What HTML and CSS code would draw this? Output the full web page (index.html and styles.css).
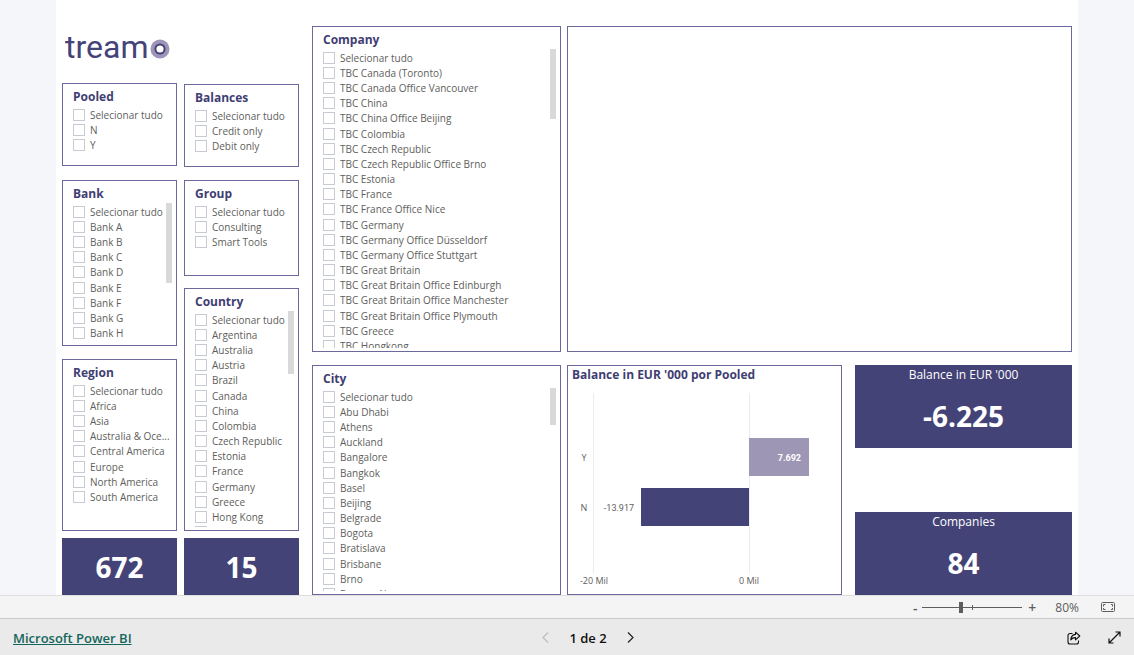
FILE: index.html
```html
<!DOCTYPE html>
<html lang="pt">
<head>
<meta charset="utf-8">
<title>Treamo – Microsoft Power BI</title>
<link rel="stylesheet" href="styles.css">
</head>
<body>
<div class="report">
  <main class="canvas">
    <div class="filters">
      <h1 class="logo">
        <span>tream</span><svg class="logo-ring" viewBox="0 0 20 20" role="img" aria-label="o"><circle cx="10" cy="10" r="9.5" fill="#9e96b8"/><circle cx="10" cy="10" r="4.6" fill="#fff" stroke="#444377" stroke-width="2"/></svg>
      </h1>
      <div class="filter-columns">
        <div class="stack first">
          <section class="panel slicer pooled">
            <h2>Pooled</h2>
            <ul>
              <li><label><input type="checkbox"><span>Selecionar tudo</span></label></li>
              <li><label><input type="checkbox"><span>N</span></label></li>
              <li><label><input type="checkbox"><span>Y</span></label></li>
            </ul>
          </section>
          <section class="panel slicer bank">
            <h2>Bank</h2>
            <ul>
              <li><label><input type="checkbox"><span>Selecionar tudo</span></label></li>
              <li><label><input type="checkbox"><span>Bank A</span></label></li>
              <li><label><input type="checkbox"><span>Bank B</span></label></li>
              <li><label><input type="checkbox"><span>Bank C</span></label></li>
              <li><label><input type="checkbox"><span>Bank D</span></label></li>
              <li><label><input type="checkbox"><span>Bank E</span></label></li>
              <li><label><input type="checkbox"><span>Bank F</span></label></li>
              <li><label><input type="checkbox"><span>Bank G</span></label></li>
              <li><label><input type="checkbox"><span>Bank H</span></label></li>
            </ul>
            <i class="thumb"></i>
          </section>
          <section class="panel slicer region">
            <h2>Region</h2>
            <ul>
              <li><label><input type="checkbox"><span>Selecionar tudo</span></label></li>
              <li><label><input type="checkbox"><span>Africa</span></label></li>
              <li><label><input type="checkbox"><span>Asia</span></label></li>
              <li><label><input type="checkbox"><span>Australia &amp; Oce...</span></label></li>
              <li><label><input type="checkbox"><span>Central America</span></label></li>
              <li><label><input type="checkbox"><span>Europe</span></label></li>
              <li><label><input type="checkbox"><span>North America</span></label></li>
              <li><label><input type="checkbox"><span>South America</span></label></li>
            </ul>
          </section>
          <section class="tile"><p class="value">672</p></section>
        </div>
        <div class="stack second">
          <section class="panel slicer balances">
            <h2>Balances</h2>
            <ul>
              <li><label><input type="checkbox"><span>Selecionar tudo</span></label></li>
              <li><label><input type="checkbox"><span>Credit only</span></label></li>
              <li><label><input type="checkbox"><span>Debit only</span></label></li>
            </ul>
          </section>
          <section class="panel slicer group">
            <h2>Group</h2>
            <ul>
              <li><label><input type="checkbox"><span>Selecionar tudo</span></label></li>
              <li><label><input type="checkbox"><span>Consulting</span></label></li>
              <li><label><input type="checkbox"><span>Smart Tools</span></label></li>
            </ul>
          </section>
          <section class="panel slicer country">
            <h2>Country</h2>
            <ul>
              <li><label><input type="checkbox"><span>Selecionar tudo</span></label></li>
              <li><label><input type="checkbox"><span>Argentina</span></label></li>
              <li><label><input type="checkbox"><span>Australia</span></label></li>
              <li><label><input type="checkbox"><span>Austria</span></label></li>
              <li><label><input type="checkbox"><span>Brazil</span></label></li>
              <li><label><input type="checkbox"><span>Canada</span></label></li>
              <li><label><input type="checkbox"><span>China</span></label></li>
              <li><label><input type="checkbox"><span>Colombia</span></label></li>
              <li><label><input type="checkbox"><span>Czech Republic</span></label></li>
              <li><label><input type="checkbox"><span>Estonia</span></label></li>
              <li><label><input type="checkbox"><span>France</span></label></li>
              <li><label><input type="checkbox"><span>Germany</span></label></li>
              <li><label><input type="checkbox"><span>Greece</span></label></li>
              <li><label><input type="checkbox"><span>Hong Kong</span></label></li>
              <li><label><input type="checkbox" aria-label="Hungary"></label></li>
            </ul>
            <i class="thumb"></i>
          </section>
          <section class="tile"><p class="value">15</p></section>
        </div>
      </div>
    </div>

    <div class="stack places">
      <section class="panel slicer company">
        <h2>Company</h2>
        <ul>
          <li><label><input type="checkbox"><span>Selecionar tudo</span></label></li>
          <li><label><input type="checkbox"><span>TBC Canada (Toronto)</span></label></li>
          <li><label><input type="checkbox"><span>TBC Canada Office Vancouver</span></label></li>
          <li><label><input type="checkbox"><span>TBC China</span></label></li>
          <li><label><input type="checkbox"><span>TBC China Office Beijing</span></label></li>
          <li><label><input type="checkbox"><span>TBC Colombia</span></label></li>
          <li><label><input type="checkbox"><span>TBC Czech Republic</span></label></li>
          <li><label><input type="checkbox"><span>TBC Czech Republic Office Brno</span></label></li>
          <li><label><input type="checkbox"><span>TBC Estonia</span></label></li>
          <li><label><input type="checkbox"><span>TBC France</span></label></li>
          <li><label><input type="checkbox"><span>TBC France Office Nice</span></label></li>
          <li><label><input type="checkbox"><span>TBC Germany</span></label></li>
          <li><label><input type="checkbox"><span>TBC Germany Office Düsseldorf</span></label></li>
          <li><label><input type="checkbox"><span>TBC Germany Office Stuttgart</span></label></li>
          <li><label><input type="checkbox"><span>TBC Great Britain</span></label></li>
          <li><label><input type="checkbox"><span>TBC Great Britain Office Edinburgh</span></label></li>
          <li><label><input type="checkbox"><span>TBC Great Britain Office Manchester</span></label></li>
          <li><label><input type="checkbox"><span>TBC Great Britain Office Plymouth</span></label></li>
          <li><label><input type="checkbox"><span>TBC Greece</span></label></li>
          <li><label><input type="checkbox"><span>TBC Hongkong</span></label></li>
        </ul>
        <i class="thumb"></i>
      </section>
      <section class="panel slicer city">
        <h2>City</h2>
        <ul>
          <li><label><input type="checkbox"><span>Selecionar tudo</span></label></li>
          <li><label><input type="checkbox"><span>Abu Dhabi</span></label></li>
          <li><label><input type="checkbox"><span>Athens</span></label></li>
          <li><label><input type="checkbox"><span>Auckland</span></label></li>
          <li><label><input type="checkbox"><span>Bangalore</span></label></li>
          <li><label><input type="checkbox"><span>Bangkok</span></label></li>
          <li><label><input type="checkbox"><span>Basel</span></label></li>
          <li><label><input type="checkbox"><span>Beijing</span></label></li>
          <li><label><input type="checkbox"><span>Belgrade</span></label></li>
          <li><label><input type="checkbox"><span>Bogota</span></label></li>
          <li><label><input type="checkbox"><span>Bratislava</span></label></li>
          <li><label><input type="checkbox"><span>Brisbane</span></label></li>
          <li><label><input type="checkbox"><span>Brno</span></label></li>
          <li><label><input type="checkbox"><span>Buenos Aires</span></label></li>
        </ul>
        <i class="thumb"></i>
      </section>
    </div>

    <div class="stack details">
      <section class="panel map" aria-label="Map"></section>
      <div class="summary">
        <section class="panel chart">
          <h2>Balance in EUR '000 por Pooled</h2>
          <svg viewBox="0 0 273 210">
            <path class="grid-line" d="M25.5 9v180M181.5 9v180"/>
            <rect x="181" y="54" width="60" height="38" fill="#9e96b5"/>
            <rect x="73" y="104" width="108" height="38" fill="#444377"/>
            <g class="axis-label">
              <text x="16" y="77">Y</text>
              <text x="16" y="127">N</text>
              <text x="26" y="200">-20 Mil</text>
              <text x="181" y="200">0 Mil</text>
            </g>
            <text class="bar-label" x="66" y="127">-13.917</text>
            <text class="bar-label inside" x="233" y="77">7.692</text>
          </svg>
        </section>
        <div class="cards">
          <section class="card"><h2>Balance in EUR '000</h2><p class="value">-6.225</p></section>
          <section class="card"><h2>Companies</h2><p class="value">84</p></section>
        </div>
      </div>
    </div>
  </main>

  <div class="zoom-bar">
    <div class="zoom-control">
      <button type="button" aria-label="Reduzir">-</button>
      <input type="range" min="0" max="100" value="38" aria-label="Zoom">
      <button type="button" aria-label="Ampliar">+</button>
    </div>
    <span class="zoom-value">80%</span>
    <button type="button" class="fit" aria-label="Ajustar à página">
      <svg width="15" height="11" viewBox="0 0 15 11" fill="none" stroke="#605e5c"><rect x=".5" y=".5" width="13" height="9" rx="1"/><path d="M2.500 4.500v-2h2M10 2.500h1.500v2M11.500 6v1.500H10M4.500 7.500h-2V6"/></svg>
    </button>
  </div>

  <footer class="footer">
    <a href="#">Microsoft Power BI</a>
    <nav class="pager">
      <button type="button" disabled aria-label="Página anterior"><svg width="7" height="11" viewBox="0 0 7 11" fill="none" stroke="#bdbdbd" stroke-width="1.200"><path d="M6 .5 1 5.500l5 5"/></svg></button>
      <span>1 de 2</span>
      <button type="button" aria-label="Próxima página"><svg width="7" height="11" viewBox="0 0 7 11" fill="none" stroke="#222" stroke-width="1.200"><path d="m1 .5 5 5-5 5"/></svg></button>
    </nav>
    <div class="actions">
      <button type="button" aria-label="Compartilhar"><svg width="14" height="14" viewBox="0 0 14 14" fill="none" stroke="#111" stroke-width="1.100" stroke-linejoin="round"><path d="M5.500 2.500H3a2 2 0 0 0-2 2V11a2 2 0 0 0 2 2h6.500a2 2 0 0 0 2-2V9.500"/><path d="M8.500 1.200 12.800 5 8.500 8.800V6.600C6.500 6.500 5 7.200 3.800 8.800 4 5.800 5.600 3.700 8.500 3.400z"/></svg></button>
      <button type="button" aria-label="Tela inteira"><svg width="13" height="13" viewBox="0 0 13 13" fill="none" stroke="#111" stroke-width="1.200"><path d="M1 12 12 1M7.500 1H12v4.500M1 7.500V12h4.500"/></svg></button>
    </div>
  </footer>
</div>
</body>
</html>
```

FILE: styles.css
```css
* { box-sizing: border-box; }

body {
  margin: 0;
  background: #f5f6f9;
  color: #605e5c;
  font: 10px/15px "Open Sans", "Noto Sans", sans-serif;
}

h1, h2, p, ul { margin: 0; padding: 0; }
ul { list-style: none; }

button {
  display: flex;
  align-items: center;
  justify-content: center;
  padding: 0;
  border: 0;
  background: none;
  color: inherit;
  font: inherit;
}

.report {
  display: flex;
  flex-direction: column;
  height: 100vh;
}

.canvas {
  display: grid;
  flex: 1;
  grid-template-rows: minmax(0, 1fr);
  grid-template-columns: minmax(0, 250fr) minmax(0, 255fr) minmax(0, 505fr);
  min-height: 0;
  margin: 0 56px;
  padding: 0 6px;
  background: #fff;
}

.stack {
  display: grid;
  grid-template-columns: minmax(0, 1fr);
  min-width: 0;
  min-height: 0;
}

/* Left side: logo above two columns of slicers */
.filters {
  display: flex;
  flex-direction: column;
  margin-right: 13px;
}

.logo {
  display: flex;
  align-items: center;
  height: 83px;
  padding: 10px 0 0 3px;
  color: #444377;
  font: 400 32px/36px Roboto, sans-serif;
}

.logo-ring {
  width: 20px;
  height: 20px;
  margin: 4px 0 0 2px;
}

.filter-columns {
  display: grid;
  flex: 1;
  grid-template-rows: minmax(0, 1fr);
  grid-template-columns: 1fr 1fr;
  gap: 7px;
  min-height: 0;
}

.first { grid-template-rows: minmax(0, 97fr) minmax(0, 179fr) minmax(0, 179fr) minmax(0, 57fr); }
.second { grid-template-rows: minmax(0, 97fr) minmax(0, 108fr) minmax(0, 250fr) minmax(0, 57fr); }

/* Slicer panels */
.panel {
  position: relative;
  display: flex;
  flex-direction: column;
  min-height: 0;
  border: 1px solid #6b699b;
  background: #fff;
}

.slicer { padding: 3px 4px 3px 10px; }

.panel h2 {
  color: #3f3e73;
  font-size: 12px;
  font-weight: 700;
  line-height: 19px;
}

.slicer ul {
  display: grid;
  flex: 1;
  grid-template-columns: minmax(0, 1fr);
  grid-auto-rows: 15px 15px 15px 15px 16px 15px;
  min-height: 0;
  margin-top: 2px;
  overflow: hidden;
}

.slicer label {
  display: flex;
  align-items: flex-start;
  gap: 5px;
  white-space: nowrap;
}

.slicer input {
  flex: none;
  width: 12px;
  height: 12px;
  margin: 1px 0 0;
  border: 1px solid #c8cbd3;
  background: #fff;
  appearance: none;
}

.slicer input:checked { background: #444377; }

.thumb {
  position: absolute;
  top: 22px;
  right: 4px;
  width: 6px;
  background: #d9d9d9;
}

.bank .thumb { height: 80px; }
.country .thumb { height: 63px; }
.company .thumb { height: 70px; }
.city .thumb { height: 37px; }

.pooled { margin-bottom: 14px; }
.bank { margin-bottom: 13px; }
.region { margin-bottom: 7px; }
.balances { margin: 1px 0 13px; }
.group { margin-bottom: 12px; }
.country { margin-bottom: 7px; }

.tile {
  display: grid;
  place-items: center;
  background: #444377;
}

.value {
  color: #fff;
  font-size: 28px;
  font-weight: 700;
  line-height: 38px;
  text-align: center;
}

/* Company and city beside map, chart and cards */
.places,
.details {
  grid-template-rows: minmax(0, 326fr) minmax(0, 230fr);
  gap: 13px;
  padding-top: 26px;
}

.places { margin-right: 6px; }

.summary {
  display: grid;
  grid-template-rows: minmax(0, 1fr);
  grid-template-columns: minmax(0, 275fr) minmax(0, 217fr);
  gap: 13px;
  min-height: 0;
}

.chart h2 {
  padding-left: 4px;
  line-height: 18px;
}

.chart svg {
  flex: 1;
  width: 100%;
  min-height: 0;
}

.grid-line { stroke: #ececec; }

.axis-label,
.bar-label {
  fill: #605e5c;
  font-size: 9px;
  text-anchor: middle;
}

.bar-label {
  font-family: Roboto, sans-serif;
  text-anchor: end;
}

.inside {
  fill: #fff;
  font-weight: 700;
}

.cards {
  display: flex;
  flex-direction: column;
  justify-content: space-between;
}

.card {
  flex: 0 0 36%;
  background: #444377;
}

.card h2 {
  color: #fff;
  font-size: 12px;
  font-weight: 400;
  line-height: 19px;
  text-align: center;
}

.card .value { padding-top: 13px; }

/* Zoom bar */
.zoom-bar {
  display: flex;
  align-items: center;
  justify-content: flex-end;
  height: 24px;
  padding-right: 18px;
  border-top: 1px solid #dedede;
  border-bottom: 1px solid #c8c8c8;
  background: #f4f4f4;
}

.zoom-control {
  display: flex;
  align-items: center;
}

.zoom-control button {
  width: 14px;
  height: 20px;
  font-size: 14px;
  font-weight: 600;
}

.zoom-control input {
  width: 100px;
  height: 12px;
  margin: 0 3px 0 0;
  background:
    linear-gradient(#605e5c, #605e5c) 50px 4px / 1px 5px no-repeat,
    linear-gradient(#605e5c, #605e5c) 0 6px / 100% 1px no-repeat;
  appearance: none;
}

.zoom-control input::-webkit-slider-thumb {
  width: 4px;
  height: 11px;
  background: #605e5c;
  appearance: none;
}

.zoom-value {
  margin: 0 22px 0 16px;
  font-size: 12px;
}

/* Footer */
.footer {
  display: grid;
  grid-template-columns: 1fr auto 1fr;
  align-items: center;
  height: 36px;
  padding: 1px 13px 0;
  background: #eaeaea;
}

.footer a {
  justify-self: start;
  color: #14665c;
  font-size: 13px;
  font-weight: 600;
  line-height: 20px;
}

.pager {
  display: flex;
  align-items: center;
  gap: 20px;
  padding-left: 42px;
  color: #111;
  font-size: 13px;
  font-weight: 600;
  line-height: 20px;
}

.actions {
  display: flex;
  gap: 27px;
  justify-content: flex-end;
}
```
